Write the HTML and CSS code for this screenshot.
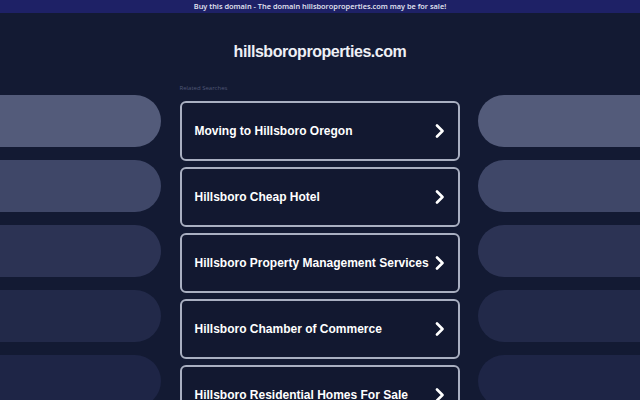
FILE: index.html
```html
<!DOCTYPE html>
<html>
<head>
<meta charset="utf-8">
<link rel="stylesheet" href="styles.css">
</head>
<body>
<div class="topbar">Buy this domain - The domain hillsboroproperties.com may be for sale!</div>
<h1 class="title">hillsboroproperties.com</h1>
<div class="layout">
  <div class="side side-left">
    <div class="pill p1"></div>
    <div class="pill p2"></div>
    <div class="pill p3"></div>
    <div class="pill p4"></div>
    <div class="pill p5"></div>
  </div>
  <div class="center">
    <div class="label">Related Searches</div>
    <div class="cards">
      <a class="card"><span>Moving to Hillsboro Oregon</span><svg class="chev" viewBox="0 0 10 14"><path d="M2 1.5 L7.5 7 L2 12.5"/></svg></a>
      <a class="card"><span>Hillsboro Cheap Hotel</span><svg class="chev" viewBox="0 0 10 14"><path d="M2 1.5 L7.5 7 L2 12.5"/></svg></a>
      <a class="card"><span>Hillsboro Property Management Services</span><svg class="chev" viewBox="0 0 10 14"><path d="M2 1.5 L7.5 7 L2 12.5"/></svg></a>
      <a class="card"><span>Hillsboro Chamber of Commerce</span><svg class="chev" viewBox="0 0 10 14"><path d="M2 1.5 L7.5 7 L2 12.5"/></svg></a>
      <a class="card"><span>Hillsboro Residential Homes For Sale</span><svg class="chev" viewBox="0 0 10 14"><path d="M2 1.5 L7.5 7 L2 12.5"/></svg></a>
    </div>
  </div>
  <div class="side side-right">
    <div class="pill p1"></div>
    <div class="pill p2"></div>
    <div class="pill p3"></div>
    <div class="pill p4"></div>
    <div class="pill p5"></div>
  </div>
</div>
</body>
</html>
```
FILE: styles.css
```css
html, body {
  margin: 0;
  padding: 0;
  background: #131a33;
  height: 100%;
  overflow: hidden;
}
body {
  font-family: "Liberation Sans", Arial, sans-serif;
  color: #fff;
}
.topbar {
  height: 13px;
  background: #1e2166;
  color: #e6e8f4;
  font-family: "Open Sans", sans-serif;
  font-weight: 600;
  font-size: 7.4px;
  line-height: 13px;
  text-align: center;
}
.title {
  margin: 29px 0 18px;
  height: 20px;
  line-height: 20px;
  text-align: center;
  font-family: "Liberation Sans", sans-serif;
  font-weight: bold;
  font-size: 16px;
  letter-spacing: -0.45px;
  color: #eef0f6;
}
.layout {
  display: grid;
  grid-template-columns: 161px 280px 162px;
  column-gap: 18px;
  justify-content: space-between;
}
.side {
  padding-top: 15px;
  display: flex;
  flex-direction: column;
  gap: 13px;
}
.pill {
  height: 52px;
}
.side-left .pill { border-radius: 0 26px 26px 0; }
.side-right .pill { border-radius: 26px 0 0 26px; }
.p1 { background: #535b7a; }
.p2 { background: #3f4768; }
.p3 { background: #2c3354; }
.p4 { background: #222949; }
.p5 { background: #1e2546; }
.label {
  height: 21px;
  font-family: "Open Sans", sans-serif;
  font-size: 6px;
  line-height: 16px;
  color: #4f5675;
}
.cards {
  display: flex;
  flex-direction: column;
  gap: 6px;
}
.card {
  box-sizing: border-box;
  height: 60px;
  border: 2px solid #a9afc1;
  border-radius: 6px;
  background: #121830;
  display: flex;
  align-items: center;
  justify-content: space-between;
  padding: 0 13px 0 13px;
  font-weight: bold;
  font-size: 12px;
  color: #fff;
  white-space: nowrap;
}
.chev {
  width: 10px;
  height: 14px;
  flex: none;
  fill: none;
  stroke: #fff;
  stroke-width: 2.6;
  stroke-linecap: round;
  stroke-linejoin: round;
}
```
